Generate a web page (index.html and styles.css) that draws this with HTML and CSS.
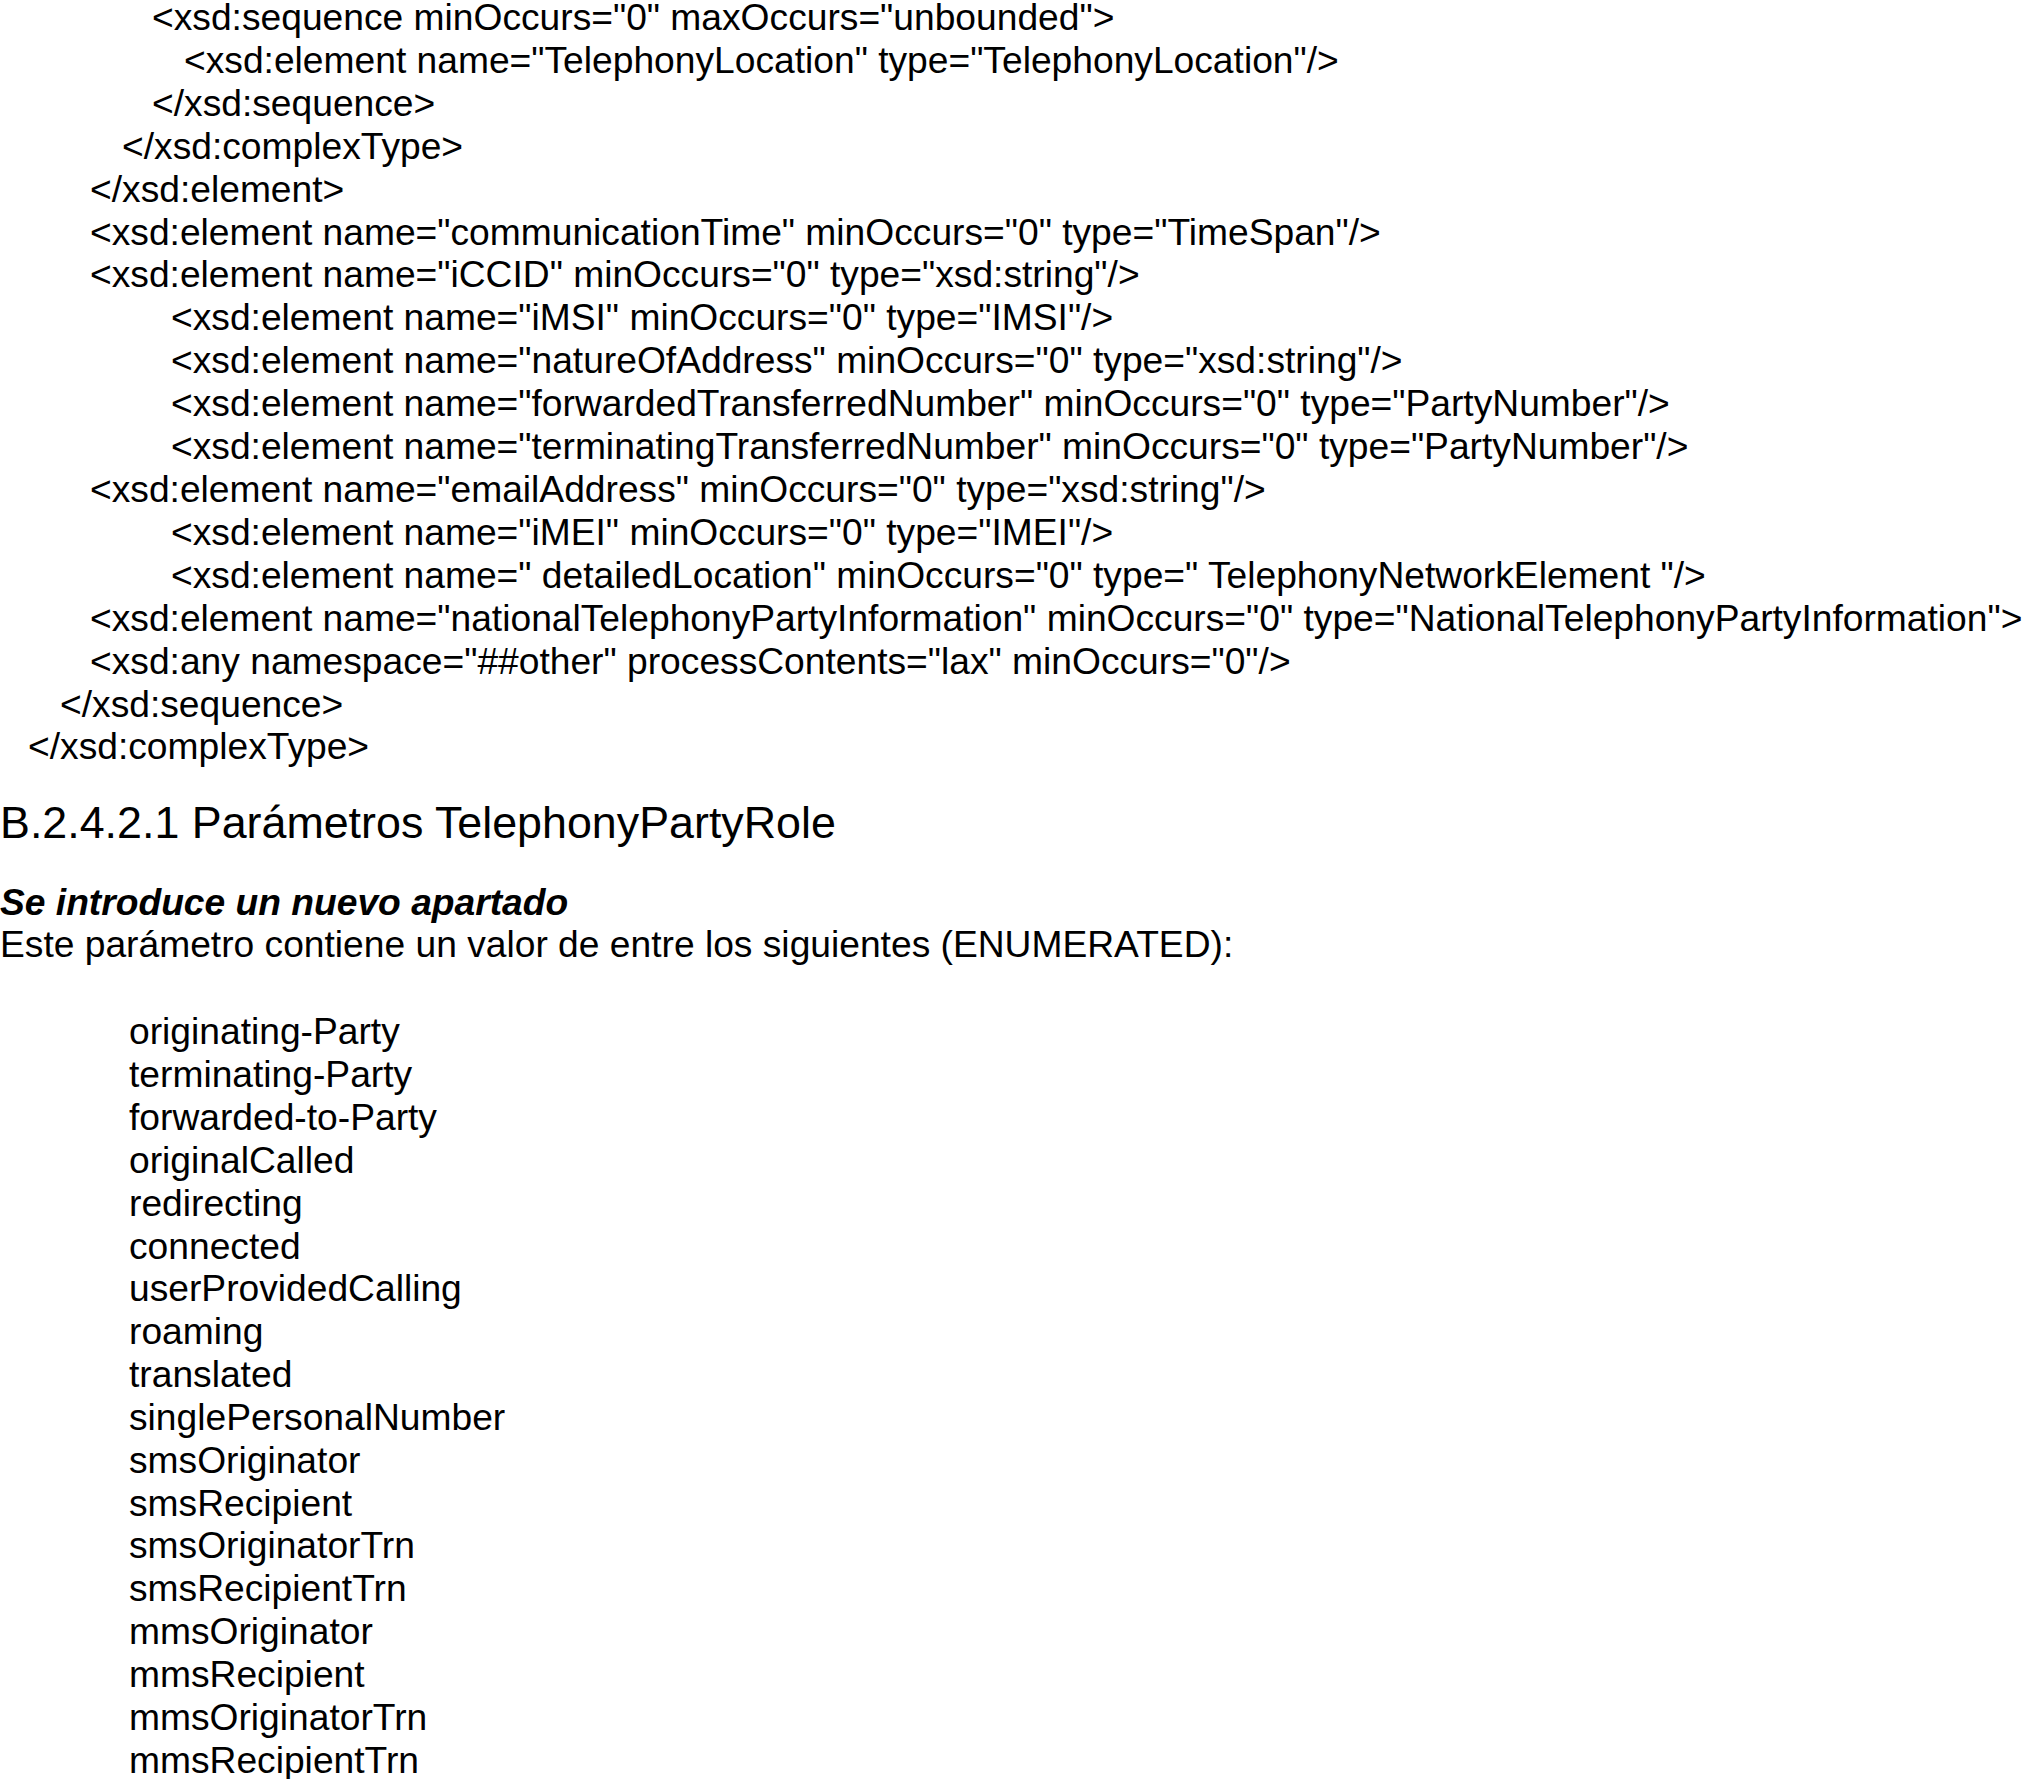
FILE: index.html
```html
<!DOCTYPE html>
<html lang="es">
<head>
<meta charset="utf-8">
<title>B.2.4.2.1 Parámetros TelephonyPartyRole</title>
<link rel="stylesheet" href="styles.css">
</head>
<body>
<div class="doc">
  <div class="code">
    <div class="ln i5">&lt;xsd:sequence minOccurs="0" maxOccurs="unbounded"&gt;</div>
    <div class="ln i6">&lt;xsd:element name="TelephonyLocation" type="TelephonyLocation"/&gt;</div>
    <div class="ln i5">&lt;/xsd:sequence&gt;</div>
    <div class="ln i4">&lt;/xsd:complexType&gt;</div>
    <div class="ln i3">&lt;/xsd:element&gt;</div>
    <div class="ln i3">&lt;xsd:element name="communicationTime" minOccurs="0" type="TimeSpan"/&gt;</div>
    <div class="ln i3">&lt;xsd:element name="iCCID" minOccurs="0" type="xsd:string"/&gt;</div>
    <div class="ln i7">&lt;xsd:element name="iMSI" minOccurs="0" type="IMSI"/&gt;</div>
    <div class="ln i7">&lt;xsd:element name="natureOfAddress" minOccurs="0" type="xsd:string"/&gt;</div>
    <div class="ln i7">&lt;xsd:element name="forwardedTransferredNumber" minOccurs="0" type="PartyNumber"/&gt;</div>
    <div class="ln i7">&lt;xsd:element name="terminatingTransferredNumber" minOccurs="0" type="PartyNumber"/&gt;</div>
    <div class="ln i3">&lt;xsd:element name="emailAddress" minOccurs="0" type="xsd:string"/&gt;</div>
    <div class="ln i7">&lt;xsd:element name="iMEI" minOccurs="0" type="IMEI"/&gt;</div>
    <div class="ln i7">&lt;xsd:element name=" detailedLocation" minOccurs="0" type=" TelephonyNetworkElement "/&gt;</div>
    <div class="ln i3">&lt;xsd:element name="nationalTelephonyPartyInformation" minOccurs="0" type="NationalTelephonyPartyInformation"&gt;</div>
    <div class="ln i3">&lt;xsd:any namespace="##other" processContents="lax" minOccurs="0"/&gt;</div>
    <div class="ln i2">&lt;/xsd:sequence&gt;</div>
    <div class="ln i1">&lt;/xsd:complexType&gt;</div>
  </div>

  <h4 class="heading">B.2.4.2.1 Parámetros TelephonyPartyRole</h4>

  <p class="note">Se introduce un nuevo apartado</p>
  <p class="para">Este parámetro contiene un valor de entre los siguientes (ENUMERATED):</p>

  <ul class="enum">
    <li>originating-Party</li>
    <li>terminating-Party</li>
    <li>forwarded-to-Party</li>
    <li>originalCalled</li>
    <li>redirecting</li>
    <li>connected</li>
    <li>userProvidedCalling</li>
    <li>roaming</li>
    <li>translated</li>
    <li>singlePersonalNumber</li>
    <li>smsOriginator</li>
    <li>smsRecipient</li>
    <li>smsOriginatorTrn</li>
    <li>smsRecipientTrn</li>
    <li>mmsOriginator</li>
    <li>mmsRecipient</li>
    <li>mmsOriginatorTrn</li>
    <li>mmsRecipientTrn</li>
  </ul>
</div>
</body>
</html>
```

FILE: styles.css
```css
html, body {
  margin: 0;
  padding: 0;
  background: #ffffff;
}

body {
  font-family: "Liberation Sans", Arial, sans-serif;
  color: #000000;
  overflow: hidden;
}

.doc {
  display: flex;
  flex-direction: column;
}

.code {
  display: flex;
  flex-direction: column;
  margin-top: -4px;
  font-size: 37.2px;
  line-height: 42.9px;
}

.ln {
  white-space: pre;
}

.i1 { padding-left: 28px; }
.i2 { padding-left: 60px; }
.i3 { padding-left: 90px; }
.i4 { padding-left: 122px; }
.i5 { padding-left: 152px; }
.i6 { padding-left: 184px; }
.i7 { padding-left: 171px; }

.heading {
  margin: 29px 0 0 0;
  font-size: 44.8px;
  font-weight: normal;
  line-height: 51px;
}

.note {
  margin: 33px 0 0 0;
  font-size: 37.2px;
  line-height: 42px;
  font-weight: bold;
  font-style: italic;
}

.para {
  margin: 0;
  font-size: 37.2px;
  line-height: 42px;
}

.enum {
  list-style: none;
  margin: 45px 0 0 0;
  padding: 0 0 0 129px;
  font-size: 37.2px;
  line-height: 42.85px;
}
```
